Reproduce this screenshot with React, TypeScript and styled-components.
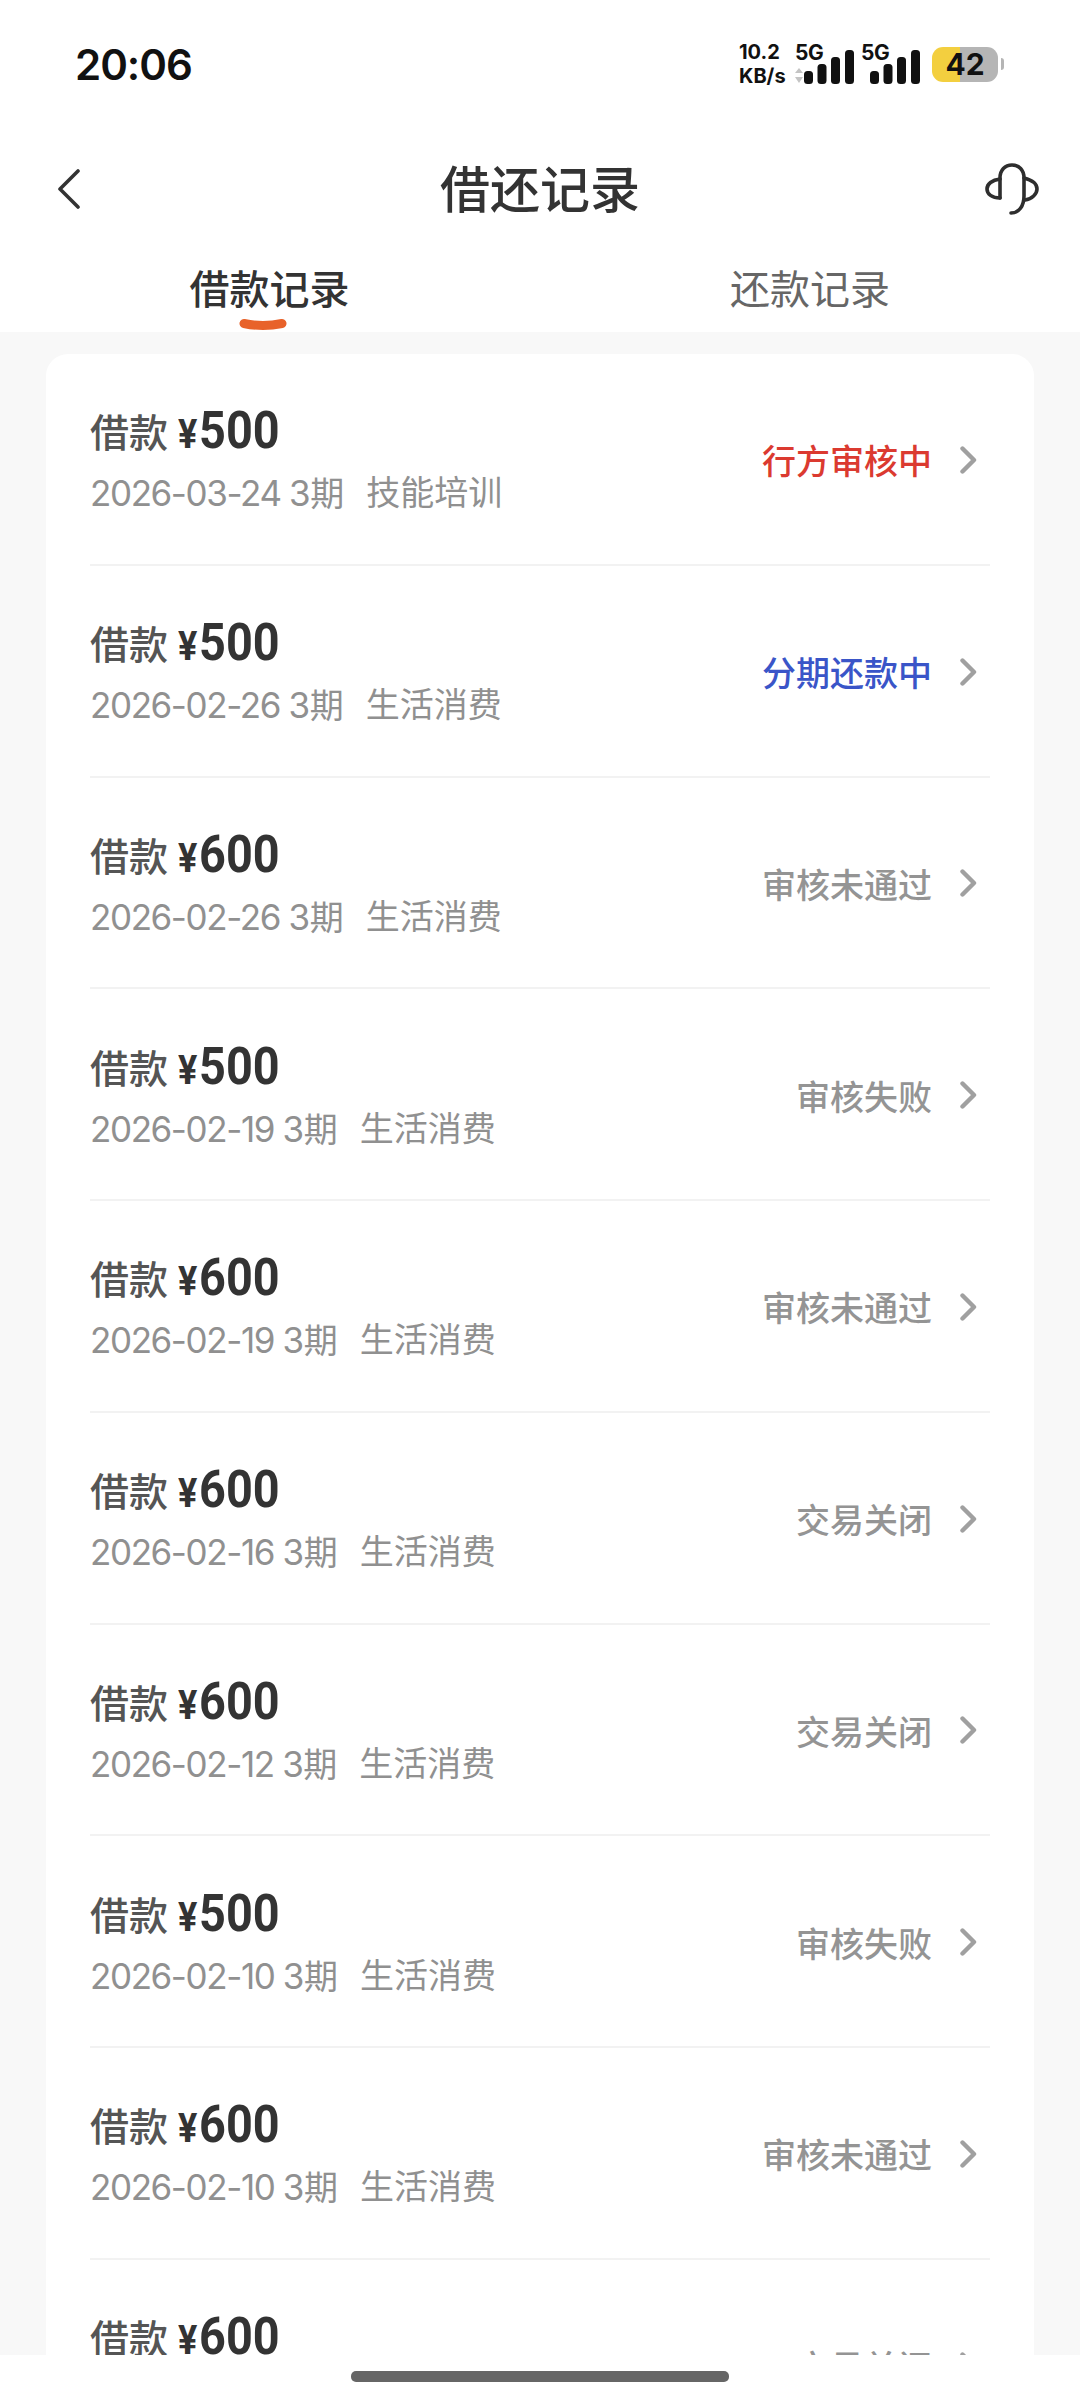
import { createGlobalStyle } from "styled-components"
import styled from "styled-components"

const GlobalStyle = createGlobalStyle`
	html, body {
		margin: 0;
		padding: 0;
		background: #fff;
	}
	* {
		box-sizing: border-box;
	}
`

const cjk = `Inter, "Noto Sans CJK SC", sans-serif`

type Tone = "red" | "blue" | "gray"

const toneColors: Record<Tone, string> = {
	red: "#db3a30",
	blue: "#3a55c8",
	gray: "#949494",
}

const records: { amount: string, date: string, use: string, status: string, tone: Tone }[] = [
	{ amount: "500", date: "2026-03-24", use: "技能培训", status: "行方审核中", tone: "red" },
	{ amount: "500", date: "2026-02-26", use: "生活消费", status: "分期还款中", tone: "blue" },
	{ amount: "600", date: "2026-02-26", use: "生活消费", status: "审核未通过", tone: "gray" },
	{ amount: "500", date: "2026-02-19", use: "生活消费", status: "审核失败", tone: "gray" },
	{ amount: "600", date: "2026-02-19", use: "生活消费", status: "审核未通过", tone: "gray" },
	{ amount: "600", date: "2026-02-16", use: "生活消费", status: "交易关闭", tone: "gray" },
	{ amount: "600", date: "2026-02-12", use: "生活消费", status: "交易关闭", tone: "gray" },
	{ amount: "500", date: "2026-02-10", use: "生活消费", status: "审核失败", tone: "gray" },
	{ amount: "600", date: "2026-02-10", use: "生活消费", status: "审核未通过", tone: "gray" },
	{ amount: "600", date: "2026-02-08", use: "生活消费", status: "交易关闭", tone: "gray" },
]

const SignalBars = ({ arrows }: { arrows?: boolean }) => (
	<svg width="59" height="34" viewBox="0 0 59 34">
		{arrows && <path d="M4 18 L8 23 H0 Z M0 27 H8 L4 33 Z" fill="#c4c4c4" />}
		<rect x="9" y="21" width="9" height="13" rx="3.5" fill="#111" />
		<rect x="22.5" y="14" width="9" height="20" rx="3.5" fill="#111" />
		<rect x="36" y="7" width="9" height="27" rx="3.5" fill="#111" />
		<rect x="50" y="0" width="9" height="34" rx="3.5" fill="#111" />
	</svg>
)

const App = () => {
	return (
		<Page>
			<GlobalStyle />
			<StatusBar>
				<Clock>20:06</Clock>
				<StatusRight>
					<Speed>
						<span>10.2</span>
						<span>KB/s</span>
					</Speed>
					<Network>
						<NetLabel>5G</NetLabel>
						<SignalBars arrows />
					</Network>
					<Network>
						<NetLabel>5G</NetLabel>
						<SignalBars />
					</Network>
					<Battery>
						<BatteryText>42</BatteryText>
					</Battery>
					<BatteryTip />
				</StatusRight>
			</StatusBar>
			<NavBar>
				<BackIcon width="24" height="40" viewBox="0 0 24 40">
					<path d="M21 2 L3 20 L21 38" fill="none" stroke="#333" strokeWidth="3.6" strokeLinecap="round" strokeLinejoin="round" />
				</BackIcon>
				<Title>借还记录</Title>
				<HeadsetIcon width="54" height="54" viewBox="0 0 54 54">
					<path d="M15 36 V16 C15 8 20 3 27 3 C34 3 39 8 39 16 V34 C39 44 34 51 26 51" fill="none" stroke="#2e2e2e" strokeWidth="3.6" strokeLinecap="round" />
					<path d="M15 17 C7 18 2 22 2 27 C2 32 7 36 15 36" fill="none" stroke="#2e2e2e" strokeWidth="3.6" strokeLinecap="round" />
					<path d="M39 16 C47 18 52 22 52 27 C52 32 47 37 40 38" fill="none" stroke="#2e2e2e" strokeWidth="3.6" strokeLinecap="round" />
				</HeadsetIcon>
			</NavBar>
			<Tabs>
				<Tab $active>
					借款记录
					<TabMark width="48" height="14" viewBox="0 0 48 14">
						<path d="M5 5.5 Q24 9.5 43 5.5" fill="none" stroke="#e8622a" strokeWidth="9" strokeLinecap="round" />
					</TabMark>
				</Tab>
				<Tab>还款记录</Tab>
			</Tabs>
			<Content>
				<Card>
					{records.map((rec, i) => (
						<Row key={i}>
							<RowMain>
								<AmountLine>
									<Label>借款</Label>
									<Amount><small>¥</small>{rec.amount}</Amount>
								</AmountLine>
								<MetaLine>
									<span>{rec.date} 3<Unit>期</Unit></span>
									<Unit>{rec.use}</Unit>
								</MetaLine>
							</RowMain>
							<Status $tone={rec.tone}>{rec.status}</Status>
							<RowArrow width="17" height="28" viewBox="0 0 17 28">
								<path d="M2.5 2.5 L14 14 L2.5 25.5" fill="none" stroke="#a0a0a0" strokeWidth="4.4" strokeLinecap="round" strokeLinejoin="round" />
							</RowArrow>
						</Row>
					))}
				</Card>
			</Content>
			<HomeArea>
				<HomeBar />
			</HomeArea>
		</Page>
	)
}

const Page = styled.div`
	position: relative;
	width: 1080px;
	height: 2400px;
	overflow: hidden;
	display: flex;
	flex-direction: column;
	background: #f8f8f8;
	font-family: ${cjk};
`

const StatusBar = styled.div`
	height: 128px;
	flex: none;
	background: #fff;
	display: flex;
	align-items: center;
	justify-content: space-between;
	padding: 0 76px 0 75px;
`

const Clock = styled.div`
	font-size: 42px;
	font-weight: 600;
	letter-spacing: -1px;
	color: #111;
`

const StatusRight = styled.div`
	display: flex;
	align-items: center;
`

const Speed = styled.div`
	width: 56px;
	display: flex;
	flex-direction: column;
	font-size: 20px;
	line-height: 24px;
	font-weight: 700;
	color: #111;
	white-space: nowrap;
`

const Network = styled.div`
	position: relative;
	width: 59px;
	height: 40px;
	margin-right: 7px;
	display: flex;
	align-items: flex-end;
`

const NetLabel = styled.span`
	position: absolute;
	left: 0;
	top: -3px;
	font-size: 21px;
	line-height: 24px;
	font-weight: 700;
	letter-spacing: -0.5px;
	color: #111;
`

const Battery = styled.div`
	width: 66px;
	height: 35px;
	margin-left: 5px;
	border-radius: 11px;
	background: linear-gradient(90deg, #f3cf3f 0 42%, #b5b5b5 42% 100%);
	display: flex;
	align-items: center;
	justify-content: center;
`

const BatteryText = styled.span`
	font-size: 30px;
	font-weight: 700;
	color: #111;
`

const BatteryTip = styled.div`
	width: 3px;
	height: 12px;
	margin-left: 3px;
	border-radius: 0 3px 3px 0;
	background: #b5b5b5;
`

const NavBar = styled.div`
	height: 122px;
	flex: none;
	background: #fff;
	display: grid;
	grid-template-columns: 1fr auto 1fr;
	align-items: center;
	padding: 0 41px;
`

const BackIcon = styled.svg`
	margin-left: 16px;
`

const Title = styled.div`
	font-size: 50px;
	font-weight: 500;
	padding-bottom: 6px;
	color: #333;
`

const HeadsetIcon = styled.svg`
	justify-self: end;
`

const Tabs = styled.div`
	height: 82px;
	flex: none;
	background: #fff;
	display: flex;
`

const Tab = styled.div<{ $active?: boolean }>`
	position: relative;
	flex: none;
	width: 540px;
	padding-top: 12px;
	padding-right: ${(p) => (p.$active ? "1px" : "0")};
	text-align: center;
	font-size: 40px;
	line-height: 56px;
	font-weight: ${(p) => (p.$active ? 500 : 400)};
	color: ${(p) => (p.$active ? "#333" : "#666")};
`

const TabMark = styled.svg`
	position: absolute;
	left: 239px;
	bottom: 0;
`

const Content = styled.div`
	flex: 1;
	padding: 22px 46px 0;
`

const Card = styled.div`
	background: #fff;
	border-radius: 22px;
	padding: 0 44px;
`

const Row = styled.div`
	height: 211.75px;
	padding-top: 2px;
	display: flex;
	align-items: center;
	border-bottom: 2px solid #f2f2f2;
`

const RowMain = styled.div`
	flex: 1;
	padding-top: 2px;
	display: flex;
	flex-direction: column;
	gap: 10px;
`

const AmountLine = styled.div`
	display: flex;
	align-items: center;
	gap: 10px;
`

const Label = styled.span`
	font-size: 39px;
	line-height: 52px;
	font-weight: 500;
	color: #555;
`

const Amount = styled.span`
	display: inline-block;
	font-family: Roboto, sans-serif;
	font-size: 52px;
	line-height: 52px;
	font-weight: 700;
	color: #333;
	transform: scaleX(0.9);
	transform-origin: left center;

	small {
		font-size: 40px;
		font-weight: 700;
		margin-right: 2px;
	}
`

const MetaLine = styled.div`
	display: flex;
	gap: 21px;
	font-size: 35px;
	line-height: 44px;
	letter-spacing: -1.4px;
	color: #909090;
`

const Unit = styled.span`
	font-size: 34px;
	letter-spacing: 0;
	margin-left: 1px;
`

const Status = styled.span<{ $tone: Tone }>`
	font-size: 34px;
	font-weight: 500;
	color: ${(p) => toneColors[p.$tone]};
	margin-right: 28px;
`

const RowArrow = styled.svg`
	margin-right: 13px;
`

const HomeArea = styled.div`
	position: absolute;
	left: 0;
	right: 0;
	bottom: 0;
	height: 45px;
	background: #fff;
	display: flex;
	justify-content: center;
	padding-top: 16px;
`

const HomeBar = styled.div`
	width: 378px;
	height: 11px;
	border-radius: 5px;
	background: #666;
`

export default App
